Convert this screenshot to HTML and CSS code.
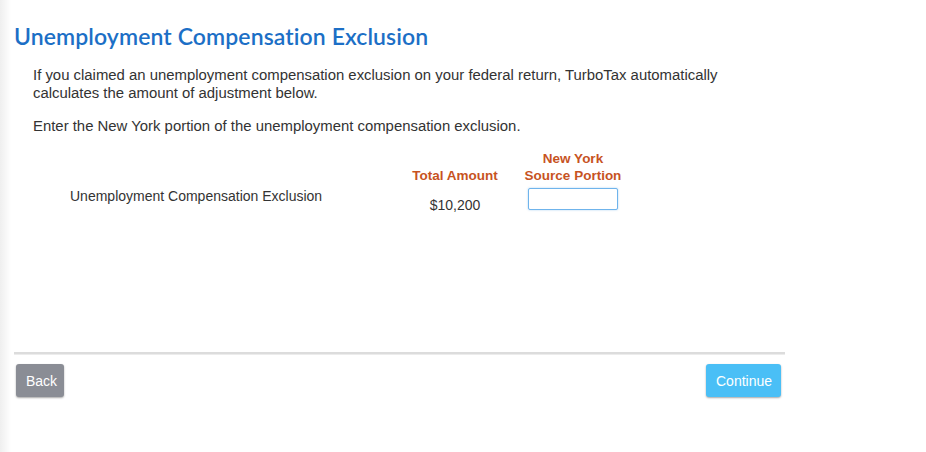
FILE: index.html
```html
<!DOCTYPE html>
<html>
<head>
<meta charset="utf-8">
<link rel="stylesheet" href="styles.css">
</head>
<body>
<div class="page">
  <div class="content">
    <h1 class="title">Unemployment Compensation Exclusion</h1>
    <div class="body">
      <p class="para">If you claimed an unemployment compensation exclusion on your federal return, TurboTax automatically calculates the amount of adjustment below.</p>
      <p class="para">Enter the New York portion of the unemployment compensation exclusion.</p>
      <div class="grid">
        <div class="label-col"></div>
        <div class="head head-total">Total Amount</div>
        <div class="head head-ny">New York<br>Source Portion</div>
        <div class="label">Unemployment Compensation Exclusion</div>
        <div class="amount">$10,200</div>
        <div class="input-cell"><input class="field" type="text"></div>
      </div>
    </div>
  </div>
  <div class="footer">
    <div class="rule"></div>
    <div class="buttons">
      <button class="btn btn-back">Back</button>
      <button class="btn btn-continue">Continue</button>
    </div>
  </div>
</div>
</body>
</html>
```
FILE: styles.css
```css
html, body {
  margin: 0;
  padding: 0;
  background: #fff;
}
body {
  font-family: "Liberation Sans", Arial, sans-serif;
  color: #333;
  width: 926px;
  height: 452px;
  overflow: hidden;
  background: linear-gradient(to right, #efefef 0px, #f6f6f6 5px, #fff 11px);
}
.page {
  width: 771px;
  padding-left: 14px;
  padding-top: 22px;
}
.content {
  height: 330px;
}
.title {
  margin: 0;
  font-family: Lato, "Open Sans", sans-serif;
  font-weight: 600;
  font-size: 23px;
  line-height: 28px;
  color: #1c6fc6;
  letter-spacing: 0.1px;
}
.body {
  padding-left: 19px;
  padding-top: 16px;
}
.para {
  margin: 0 0 15px 0;
  font-size: 14.9px;
  line-height: 18px;
  color: #333;
  width: 720px;
}
.grid {
  display: grid;
  grid-template-columns: 376px 92px 144px;
  margin-top: 5px;
}
.head {
  font-weight: bold;
  font-size: 13.5px;
  line-height: 17px;
  color: #c7531f;
  text-align: center;
  align-self: end;
}
.label {
  font-size: 14px;
  padding-left: 37px;
  padding-top: 4px;
}
.amount {
  font-size: 14px;
  text-align: center;
  padding-top: 13px;
}
.input-cell {
  padding-top: 4px;
  display: flex;
  justify-content: center;
}
.field {
  display: block;
  width: 90px;
  height: 22px;
  box-sizing: border-box;
  border: 1px solid #6fb4ec;
  border-radius: 2px;
  box-shadow: 0 0 2px rgba(80, 160, 230, 0.5);
  margin: 0;
  padding: 0;
}
.footer {
  width: 771px;
}
.rule {
  height: 2px;
  background: #dcdcdc;
  border-bottom: 1px solid #ececec;
}
.buttons {
  display: flex;
  justify-content: space-between;
  padding: 9px 4px 0 2px;
}
.btn {
  font-family: "Liberation Sans", Arial, sans-serif;
  font-size: 14px;
  color: #fff;
  border: none;
  border-radius: 3px;
  height: 33px;
  padding: 0 10px;
  box-shadow: 0 1px 2px rgba(0, 0, 0, 0.35);
  cursor: pointer;
}
.btn-back {
  background: #8a8d95;
  width: 48px;
}
.btn-continue {
  background: #4abff6;
  width: 75px;
}
```
